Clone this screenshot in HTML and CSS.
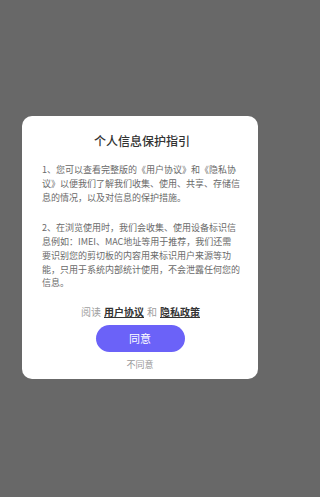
FILE: index.html
```html
<!DOCTYPE html>
<html lang="zh-CN">
<head>
<meta charset="utf-8">
<meta name="viewport" content="width=device-width, initial-scale=1">
<title>个人信息保护指引</title>
<link rel="stylesheet" href="styles.css">
</head>
<body>
<div class="overlay">
  <div class="dialog">
    <h1 class="title">个人信息保护指引</h1>
    <p class="para">1、您可以查看完整版的《用户协议》和《隐私协<br>议》以便我们了解我们收集、使用、共享、存储信<br>息的情况，以及对信息的保护措施。</p>
    <p class="para para-second">2、在浏览使用时，我们会收集、使用设备标识信<br>息例如：IMEI、MAC地址等用于推荐，我们还需<br>要识别您的剪切板的内容用来标识用户来源等功<br>能，只用于系统内部统计使用，不会泄露任何您的<br>信息。</p>
    <div class="links"><span class="muted">阅读</span><a class="link" href="#">用户协议</a><span class="muted">和</span><a class="link" href="#">隐私政策</a></div>
    <button class="agree" type="button">同意</button>
    <div class="disagree">不同意</div>
  </div>
</div>
</body>
</html>
```

FILE: styles.css
```css
html, body {
  margin: 0;
  padding: 0;
}
body {
  background: #686868;
  font-family: "Noto Sans CJK SC", "Noto Sans", sans-serif;
}
.overlay {
  min-height: 497px;
  box-sizing: border-box;
  padding: 116px 0 0 22px;
  display: flex;
  align-items: flex-start;
  justify-content: flex-start;
}
.dialog {
  width: 236px;
  box-sizing: border-box;
  background: #ffffff;
  border-radius: 10px;
  padding: 17px 16px 8px 20px;
  display: flex;
  flex-direction: column;
}
.title {
  margin: 0;
  font-size: 12px;
  line-height: 16px;
  font-weight: 500;
  color: #333333;
  text-align: center;
}
.para {
  margin: 14px 0 0;
  font-size: 9px;
  line-height: 13.75px;
  color: #6a6a6a;
  white-space: nowrap;
}
.para-second {
  margin-top: 17px;
}
.links {
  margin-top: 15px;
  margin-right: 3px;
  font-size: 10px;
  line-height: 14px;
  display: flex;
  justify-content: center;
  gap: 3px;
}
.muted {
  color: #a0a0a0;
}
.link {
  color: #333333;
  font-weight: 700;
  text-decoration: underline;
  text-underline-offset: 1px;
}
.agree {
  align-self: center;
  margin: 6px 4px 0 0;
  width: 89px;
  height: 26.5px;
  border: none;
  border-radius: 14px;
  background: #6b62f8;
  color: #ffffff;
  font-family: inherit;
  font-size: 11px;
  padding: 0;
}
.disagree {
  margin-top: 7.5px;
  margin-right: 4px;
  font-size: 9px;
  line-height: 12px;
  color: #999999;
  text-align: center;
}
```
